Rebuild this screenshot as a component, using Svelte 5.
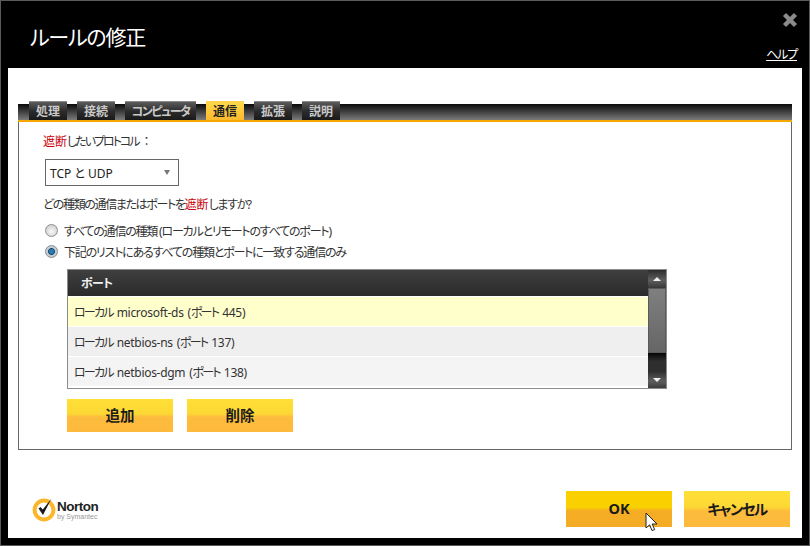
<script lang="ts">
  const tabs = [
    { label: '処理' },
    { label: '接続' },
    { label: 'コンピュータ', wide: true },
    { label: '通信', active: true },
    { label: '拡張' },
    { label: '説明' }
  ];

  const ports = [
    { name: 'microsoft-ds', port: 445, cls: 'sel' },
    { name: 'netbios-ns', port: 137, cls: 'odd' },
    { name: 'netbios-dgm', port: 138, cls: 'even' }
  ];
</script>

<div class="window">
  <header class="titlebar">
    <h1>ルールの修正</h1>
    <div class="title-side">
      <svg class="close" width="16" height="16" viewBox="0 0 16 16" aria-label="閉じる">
        <path d="M2.5 2.5 13.5 13.5M13.5 2.5 2.5 13.5" stroke="#8a8a8a" stroke-width="4.4" />
      </svg>
      <span class="help">ヘルプ</span>
    </div>
  </header>

  <main class="body">
    <nav class="tabbar">
      {#each tabs as tab}
        <div class="tab" class:wide={tab.wide} class:active={tab.active}>{tab.label}</div>
      {/each}
    </nav>

    <section class="panel">
      <p class="line first"><em>遮断</em>したいプロトコル<span class="colon">：</span></p>

      <div class="select">
        <span>TCP と UDP</span>
        <i class="caret"></i>
      </div>

      <p class="line question">どの種類の通信またはポートを<em>遮断</em>しますか?</p>

      <div class="radio-row">
        <span class="radio"></span>
        <span>すべての通信の種類 (ローカルとリモートのすべてのポート)</span>
      </div>
      <div class="radio-row">
        <span class="radio on"></span>
        <span>下記のリストにあるすべての種類とポートに一致する通信のみ</span>
      </div>

      <div class="list">
        <div class="list-main">
          <div class="list-head">ポート</div>
          {#each ports as p}
            <div class="row {p.cls}"><span class="jp">ローカル</span> {p.name} (<span class="jp">ポート</span> {p.port})</div>
          {/each}
        </div>
        <div class="scroll">
          <div class="sbtn"><i class="up"></i></div>
          <div class="thumb"></div>
          <div class="track"></div>
          <div class="sbtn"><i class="down"></i></div>
        </div>
      </div>

      <div class="list-actions">
        <button type="button" class="btn">追加</button>
        <button type="button" class="btn">削除</button>
      </div>
    </section>

    <footer class="foot">
      <div class="logo">
        <svg width="26" height="27" viewBox="0 0 26 27">
          <circle cx="13" cy="15" r="9.4" fill="none" stroke="#fbb62b" stroke-width="4" />
          <path d="M7.5 13.5 12 20 20.5 3.5 11.8 14.5 9.5 12Z" fill="#1b1b1b" />
        </svg>
        <div class="logo-text">
          <b>Norton</b>
          <small>by Symantec</small>
        </div>
      </div>
      <div class="foot-actions">
        <div class="ok-wrap">
          <button type="button" class="btn big hover">OK</button>
          <svg class="cursor" width="13" height="20" viewBox="0 0 13 20">
            <path d="M1 1V16L4.6 12.8 7 18.6 9.6 17.5 7.2 12H12Z" fill="#fff" stroke="#222" stroke-width="1" />
          </svg>
        </div>
        <button type="button" class="btn big cancel">キャンセル</button>
      </div>
    </footer>
  </main>
</div>

<style>
  :global(body) {
    margin: 0;
    background: #000;
  }

  .window {
    width: 810px;
    height: 546px;
    box-sizing: border-box;
    border: 1px solid #5a5a5a;
    background: #000;
    padding: 0 7px 7px;
    display: flex;
    flex-direction: column;
    font-family: "Noto Sans", "Noto Sans CJK JP", sans-serif;
    font-feature-settings: "palt";
    font-size: 12px;
    color: #333;
  }

  .titlebar {
    height: 67px;
    flex-shrink: 0;
    display: flex;
    justify-content: space-between;
    color: #fff;
  }

  h1 {
    margin: 21px 0 0 22px;
    font-size: 21px;
    line-height: 30px;
    font-weight: 400;
    letter-spacing: -1.2px;
  }

  .title-side {
    width: 40px;
    display: flex;
    flex-direction: column;
    align-items: flex-end;
  }

  .close {
    margin: 11px 4px 0 0;
  }

  .help {
    margin-top: 19px;
    margin-right: 5px;
    font-size: 12px;
    line-height: 15px;
    letter-spacing: -1.2px;
    white-space: nowrap;
    text-decoration: underline;
  }

  .body {
    flex: 1;
    background: #fff;
    padding: 33px 10px 0;
    display: flex;
    flex-direction: column;
    min-height: 0;
  }

  .tabbar {
    height: 21px;
    box-sizing: border-box;
    padding: 0 0 0 11px;
    display: flex;
    align-items: flex-end;
    gap: 10px;
    border-bottom: 2px solid #f5a800;
    background: linear-gradient(#fff 0 3px, #0a0a0a 3px, #3a3a3a 10px, #7a7a7a 19px);
  }

  .tab {
    width: 38px;
    height: 19px;
    box-sizing: border-box;
    border-top: 1px solid #8a8a8a;
    text-align: center;
    line-height: 20px;
    font-size: 12px;
    font-weight: 700;
    color: #c9c9c9;
    white-space: nowrap;
    background: linear-gradient(#5c5c5c, #2c2c2c 50%, #1a1a1a);
  }

  .tab.wide {
    width: 71px;
    letter-spacing: -1.5px;
  }

  .tab.active {
    color: #222;
    border-top-color: #fdd24a;
    background: linear-gradient(#ffd84a, #fdb92e);
  }

  .panel {
    height: 328px;
    box-sizing: border-box;
    border: 1px solid #666;
    border-top: 0;
    padding: 0 0 0 26px;
  }

  .line {
    margin: 0 0 0 -2px;
    line-height: 18px;
    letter-spacing: -1.35px;
  }

  .first {
    padding-top: 11px;
    letter-spacing: -2px;
  }

  .colon {
    margin-left: 5px;
  }

  em {
    font-style: normal;
    color: #c8000a;
    letter-spacing: 0;
  }

  .select {
    width: 134px;
    height: 27px;
    box-sizing: border-box;
    border: 1px solid #666;
    margin-top: 8px;
    padding: 0 8px 0 4px;
    display: flex;
    align-items: center;
    justify-content: space-between;
    font-size: 12px;
    color: #222;
  }

  .caret {
    border: 3.5px solid transparent;
    border-top: 5px solid #777;
    border-bottom: 0;
  }

  .question {
    margin-top: 10px;
  }

  .radio-row {
    display: flex;
    align-items: center;
    gap: 6px;
    height: 21px;
    letter-spacing: -1.2px;
    white-space: nowrap;
  }

  .question + .radio-row {
    margin-top: 6px;
  }

  .radio {
    width: 13px;
    height: 13px;
    flex-shrink: 0;
    box-sizing: border-box;
    border-radius: 50%;
    border: 1px solid #8f8f8f;
    background: radial-gradient(circle at 50% 60%, #f8f8f8, #c4c4c4);
  }

  .radio.on {
    border-color: #868e94;
    background: radial-gradient(circle, #2a7cb5 0 2px, #0f3f66 3px, #c6ccd1 3.8px);
  }

  .list {
    width: 600px;
    height: 120px;
    box-sizing: border-box;
    margin: 7px 0 0 22px;
    border: 1px solid #8c8c8c;
    display: flex;
  }

  .list-main {
    flex: 1;
    min-width: 0;
  }

  .list-head {
    height: 26px;
    padding-left: 13px;
    line-height: 28px;
    font-weight: 700;
    letter-spacing: -0.6px;
    color: #eee;
    background: linear-gradient(#3f3f3f, #2b2b2b);
  }

  .row {
    height: 29px;
    margin-top: 1px;
    padding-left: 6px;
    line-height: 31px;
    white-space: nowrap;
    font-size: 12px;
    letter-spacing: -0.3px;
    word-spacing: 1.2px;
  }

  .jp {
    letter-spacing: -1.8px;
  }

  .row.sel {
    background: #ffffcc;
  }

  .row.odd {
    background: #efefef;
  }

  .row.even {
    background: #f4f4f4;
  }

  .scroll {
    width: 18px;
    flex-shrink: 0;
    display: flex;
    flex-direction: column;
    background: #3a3a3a;
  }

  .sbtn {
    height: 17px;
    display: flex;
    align-items: center;
    justify-content: center;
    background: linear-gradient(#2c2c2c, #5e5e5e 60%, #3d3d3d);
  }

  .up,
  .down {
    border: 4px solid transparent;
  }

  .up {
    border-bottom: 4px solid #f0f0f0;
    border-top: 0;
  }

  .down {
    border-top: 4px solid #f0f0f0;
    border-bottom: 0;
  }

  .thumb {
    height: 65px;
    margin-top: 1px;
    box-sizing: border-box;
    border: 1px solid #5a5a5a;
    background: linear-gradient(#7f7f7f, #666);
  }

  .track {
    flex: 1;
    background: linear-gradient(#050505, #2e2e2e 45%);
  }

  .list-actions {
    display: flex;
    gap: 14px;
    margin: 10px 0 0 22px;
  }

  .btn {
    width: 106px;
    height: 33px;
    border: 0;
    padding: 0 0 3px;
    font-family: inherit;
    font-feature-settings: inherit;
    font-size: 14.5px;
    font-weight: 700;
    color: #1a1a1a;
    background: linear-gradient(#ffe036, #fdd835 45%, #fdbc3d 55%, #fdb93b);
  }

  .foot {
    flex: 1;
    display: flex;
    align-items: flex-end;
    justify-content: space-between;
    padding: 0 2px 11px 13px;
  }

  .logo {
    display: flex;
    align-items: center;
    margin-bottom: 5px;
  }

  .logo-text {
    display: flex;
    flex-direction: column;
    margin-top: 4px;
    font-family: "Liberation Sans", sans-serif;
  }

  .logo-text b {
    font-size: 13.5px;
    line-height: 12px;
    letter-spacing: -0.5px;
    color: #222;
  }

  .logo-text small {
    font-size: 7px;
    line-height: 8px;
    color: #999;
  }

  .foot-actions {
    display: flex;
    gap: 12px;
  }

  .ok-wrap {
    position: relative;
  }

  .big {
    height: 36px;
    display: block;
    padding-bottom: 2px;
  }

  .cancel {
    letter-spacing: -1.5px;
  }

  .hover {
    background: linear-gradient(#fad000, #f9d000 45%, #f4ad25 55%, #f4ab25);
  }

  .cursor {
    position: absolute;
    left: 79px;
    top: 21px;
  }
</style>
